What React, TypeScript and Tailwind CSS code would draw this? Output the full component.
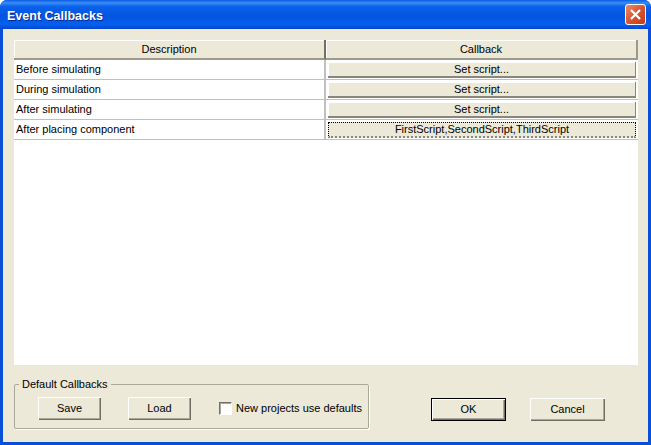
const font = { fontFamily: '"Liberation Sans", Tahoma, sans-serif' };

const rows = [
  { name: "Before simulating", value: "Set script..." },
  { name: "During simulation", value: "Set script..." },
  { name: "After simulating", value: "Set script..." },
  { name: "After placing component", value: "FirstScript,SecondScript,ThirdScript", focused: true },
];

const DialogButton = ({ label, width, isDefault }: { label: string; width: string; isDefault?: boolean }) => (
  <button
    className={`${width} h-[23px] bg-[#ece9d8] text-[11px] text-black ${
      isDefault
        ? "border border-black shadow-[inset_1px_1px_0_#fff,inset_-1px_-1px_0_#716f64,inset_-2px_-2px_0_#aca899]"
        : "shadow-[inset_1px_1px_0_#fff,inset_-1px_-1px_0_#716f64,inset_-2px_-2px_0_#aca899]"
    }`}
  >
    {label}
  </button>
);

export default function App() {
  return (
    <div
      style={font}
      className="flex h-[445px] w-[651px] flex-col overflow-hidden rounded-t-[7px] bg-[#0a4fd8] text-[11px] text-black"
    >
      {/* title bar */}
      <div className="flex h-[29px] shrink-0 items-center justify-between bg-[linear-gradient(to_bottom,#0a5ce6_0%,#3a8cf4_10%,#0a62ea_22%,#0454e2_55%,#0560ee_85%,#0344cf_100%)] pl-[7px] pr-[5px]">
        <span className="pt-[4px] text-[12.5px] font-bold text-white [text-shadow:1px_1px_0_#0a2a8a]">Event Callbacks</span>
        <div className="flex h-[21px] w-[21px] items-center justify-center rounded-[3px] border border-white bg-gradient-to-br from-[#e88a6c] via-[#d9552f] to-[#c23a17]">
          <svg width="13" height="13" viewBox="0 0 13 13">
            <path d="M2 2 L11 11 M11 2 L2 11" stroke="#fff" strokeWidth="2.2" fill="none" />
          </svg>
        </div>
      </div>

      {/* body */}
      <div className="mx-[3px] mb-[3px] flex flex-1 flex-col bg-[#ece9d8] px-[11px] pt-[11px]">
        <div className="h-[325px] w-[624px] bg-white">
          <div className="grid h-[20px] grid-cols-[312px_312px] bg-[#ece9d8]">
            <div className="flex items-center justify-center border-b-2 border-r-2 border-b-[#9d9a8a] border-r-[#716f64] shadow-[inset_1px_1px_0_#fff]">
              Description
            </div>
            <div className="flex items-center justify-center border-b-2 border-r-2 border-b-[#9d9a8a] border-r-[#9d9a8a] shadow-[inset_1px_1px_0_#fff]">
              Callback
            </div>
          </div>
          {rows.map((row) => (
            <div key={row.name} className="grid h-[20px] grid-cols-[312px_312px] border-b border-[#c0c0c0]">
              <div className="flex items-center border-r-2 border-[#c0c0c0] pl-[2px]">{row.name}</div>
              <div className="flex items-center justify-center px-[2px] pt-[1px]">
                <div
                  className={`flex h-[16px] w-full items-center justify-center bg-[#ece9d8] ${
                    row.focused
                      ? "border-t border-l border-r border-dotted border-black border-b-2 border-b-[#8a8778]"
                      : "border-b-2 border-r border-b-[#8a8778] border-r-[#8a8778] shadow-[inset_1px_1px_0_#fff]"
                  }`}
                >
                  {row.value}
                </div>
              </div>
            </div>
          ))}
        </div>

        <div className="mt-[11px] flex items-end">
          <fieldset className="h-[53px] w-[355px] rounded-[2px] border border-[#aca899] pl-[23px] shadow-[1px_1px_0_#fff]">
            <legend className="ml-[-19px] px-[3px]">Default Callbacks</legend>
            <div className="mt-[4px] flex items-center">
              <DialogButton label="Save" width="w-[63px]" />
              <div className="ml-[27px]">
                <DialogButton label="Load" width="w-[63px]" />
              </div>
              <div className="ml-[28px] h-[13px] w-[13px] border border-[#716f64] border-r-white border-b-white bg-white shadow-[inset_1px_1px_0_#aca899]" />
              <span className="ml-[4px] whitespace-nowrap">New projects use defaults</span>
            </div>
          </fieldset>
          <div className="mb-[8px] ml-[62px]">
            <DialogButton label="OK" width="w-[75px]" isDefault />
          </div>
          <div className="mb-[8px] ml-[24px]">
            <DialogButton label="Cancel" width="w-[75px]" />
          </div>
        </div>
      </div>
    </div>
  );
}
